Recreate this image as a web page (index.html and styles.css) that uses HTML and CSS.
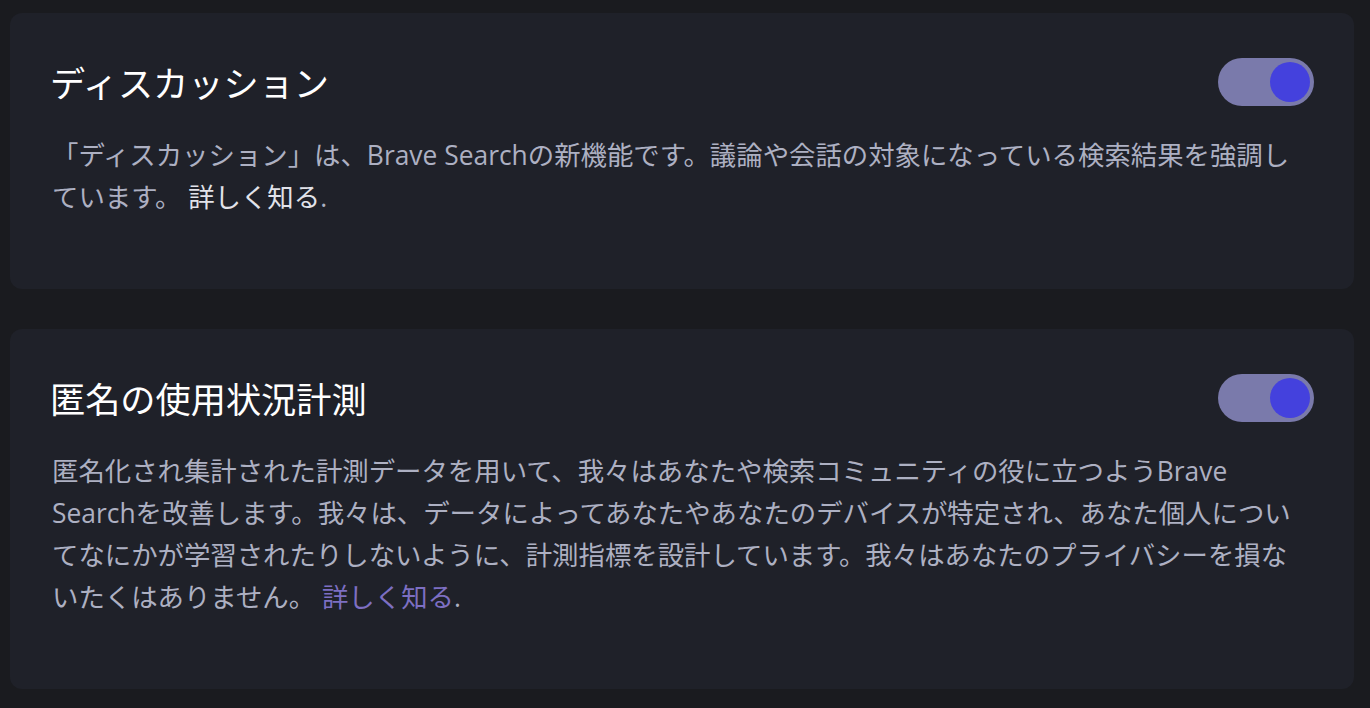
FILE: index.html
```html
<!DOCTYPE html>
<html lang="ja">
<head>
<meta charset="utf-8">
<title>設定</title>
<link rel="stylesheet" href="styles.css">
</head>
<body>
<main class="settings">
  <section class="card">
    <div class="card-head">
      <h2 class="card-title">ディスカッション</h2>
      <button class="toggle is-on" aria-pressed="true"><span class="knob"></span></button>
    </div>
    <p class="card-desc">「ディスカッション」は、Brave Searchの新機能です。議論や会話の対象になっている検索結果を強調しています。 <a class="more more-light" href="#">詳しく知る</a>.</p>
  </section>
  <section class="card">
    <div class="card-head">
      <h2 class="card-title">匿名の使用状況計測</h2>
      <button class="toggle is-on" aria-pressed="true"><span class="knob"></span></button>
    </div>
    <p class="card-desc">匿名化され集計された計測データを用いて、我々はあなたや検索コミュニティの役に立つようBrave Searchを改善します。我々は、データによってあなたやあなたのデバイスが特定され、あなた個人についてなにかが学習されたりしないように、計測指標を設計しています。我々はあなたのプライバシーを損ないたくはありません。 <a class="more" href="#">詳しく知る</a>.</p>
  </section>
</main>
</body>
</html>
```

FILE: styles.css
```css
html, body {
  margin: 0;
  padding: 0;
  background: #1a1b1f;
}
body {
  font-family: "Open Sans", "Noto Sans CJK JP", sans-serif;
  color: #a9acbe;
}
.settings {
  display: flex;
  flex-direction: column;
  gap: 40px;
  padding: 13px 16px 0 10px;
}
.card {
  background: #1f2129;
  border-radius: 12px;
  padding: 45px 40px 71px 42px;
}
.card-head {
  display: flex;
  align-items: center;
  justify-content: space-between;
  height: 48px;
}
.card-title {
  margin: 0;
  font-family: "Noto Sans CJK JP", sans-serif;
  font-weight: 400;
  font-size: 35.2px;
  line-height: 48px;
  color: #ffffff;
  transform: translateX(-2px);
}
.toggle {
  width: 96px;
  height: 48px;
  border: none;
  border-radius: 24px;
  padding: 4px;
  background: #7a7aab;
  display: flex;
  justify-content: flex-end;
  cursor: pointer;
}
.knob {
  width: 40px;
  height: 40px;
  border-radius: 50%;
  background: #4441dd;
}
.card-desc {
  margin: 28px 0 0;
  padding-right: 12px;
  font-size: 26.4px;
  line-height: 42px;
  color: #adb0c2;
}
.more {
  color: #7d6fc2;
  text-decoration: none;
}
.more-light {
  color: #e2e3ea;
}
```
